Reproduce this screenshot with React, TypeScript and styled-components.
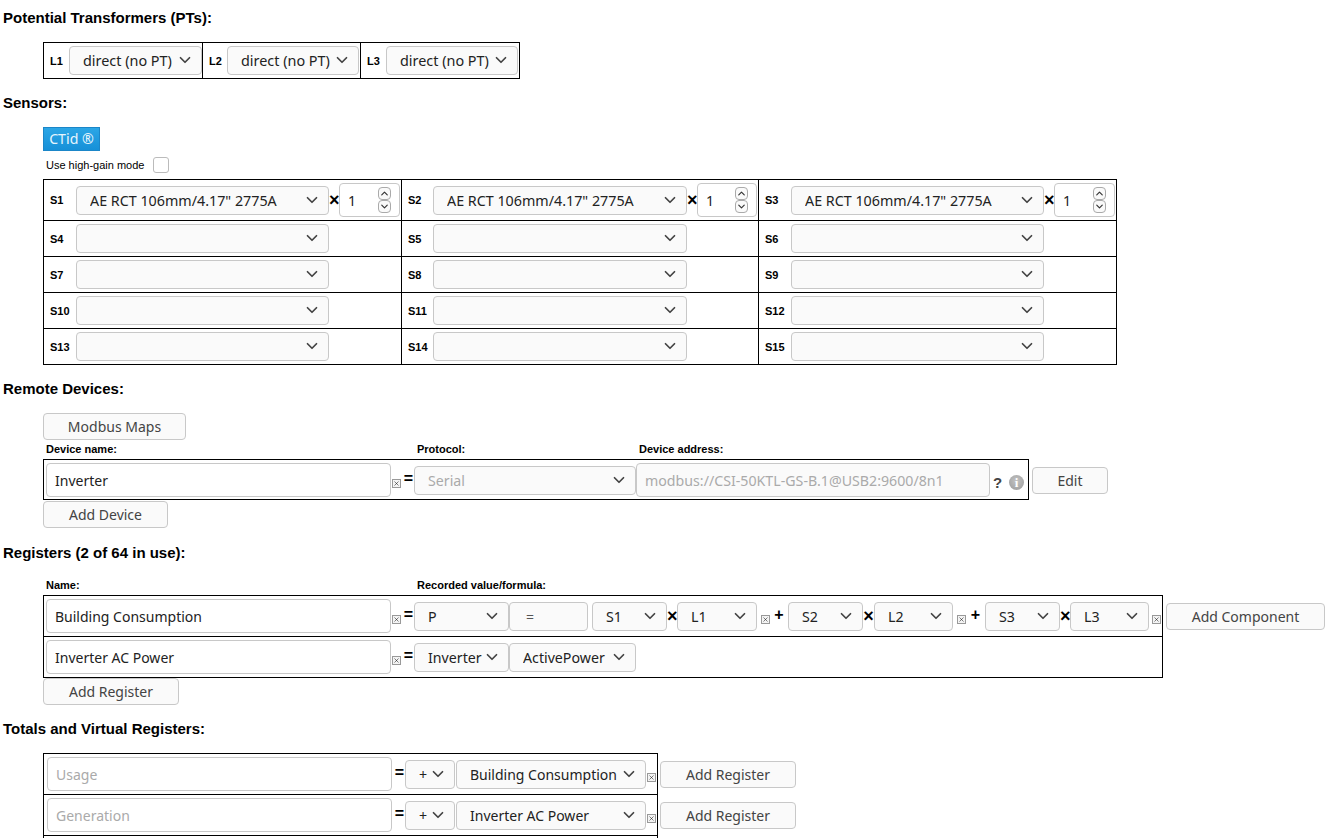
import React, { FC, ReactElement } from "react";
import styled, { createGlobalStyle } from "styled-components";
import { ChevronDown, ChevronUp, X } from "lucide-react";

const GlobalStyle = createGlobalStyle`
  html, body {
    margin: 0;
    height: 838px;
    overflow: hidden;
    background: #fff;
    color: #000;
    font-family: "Liberation Sans", Arial, sans-serif;
  }
`;

const CONTROL_FONT = `"Noto Sans", "Open Sans", sans-serif`;

type DropdownProps = {
  width: number;
  value?: string;
  disabled?: boolean;
  fontSize?: number;
};

const Dropdown: FC<DropdownProps> = ({ width, value = "", disabled, fontSize = 14.2 }: DropdownProps): ReactElement => {
  return (
    <StyledDropdown $width={width}>
      <StyledSelect $fontSize={fontSize} defaultValue={value} disabled={disabled}>
        <option value={value}>{value}</option>
      </StyledSelect>
      <StyledChevron>
        <ChevronDown size={18} strokeWidth={2.3} />
      </StyledChevron>
    </StyledDropdown>
  );
};

const Multiplier: FC<{ width: number }> = ({ width }): ReactElement => (
  <StyledMultiplier $width={width}>
    <StyledNumberInput type="text" defaultValue="1" />
    <StyledStepper>
      <StyledStep>
        <ChevronUp size={11} strokeWidth={2.5} />
      </StyledStep>
      <StyledStep>
        <ChevronDown size={11} strokeWidth={2.5} />
      </StyledStep>
    </StyledStepper>
  </StyledMultiplier>
);

const RemoveBox: FC<{ left?: number }> = ({ left = 1 }): ReactElement => (
  <StyledRemoveBox $left={left}>
    <X size={11} strokeWidth={1.7} />
  </StyledRemoveBox>
);

const PT_CELLS = [
  { label: "L1", width: 159, selectWidth: 133, labelWidth: 19 },
  { label: "L2", width: 158, selectWidth: 132, labelWidth: 18 },
  { label: "L3", width: 158, selectWidth: 132, labelWidth: 19 },
];

const SENSOR_COLUMNS = [
  { width: 358, labelWidth: 26, selectWidth: 253, numberWidth: 61 },
  { width: 357, labelWidth: 25, selectWidth: 254, numberWidth: 60 },
  { width: 357, labelWidth: 26, selectWidth: 253, numberWidth: 61 },
];

const SENSOR_ROWS = [
  ["S1", "S2", "S3"],
  ["S4", "S5", "S6"],
  ["S7", "S8", "S9"],
  ["S10", "S11", "S12"],
  ["S13", "S14", "S15"],
];

const TERMS = [
  { sensor: "S1", line: "L1", plusWidth: 4, timesWidth: 10, lineWidth: 80, boxLeft: 4 },
  { sensor: "S2", line: "L2", plusWidth: 18, timesWidth: 11, lineWidth: 79, boxLeft: 4 },
  { sensor: "S3", line: "L3", plusWidth: 19, timesWidth: 10, lineWidth: 79, boxLeft: 3 },
];

const TOTALS = [
  { name: "Usage", source: "Building Consumption" },
  { name: "Generation", source: "Inverter AC Power" },
];

export default function App(): ReactElement {
  return (
    <StyledPage>
      <GlobalStyle />

      <StyledHeading $top={9}>Potential Transformers (PTs):</StyledHeading>
      <StyledIndent $top={16}>
        <StyledTable>
          <StyledRow $height={35}>
            {PT_CELLS.map((cell) => (
              <StyledCell key={cell.label} $width={cell.width}>
                <StyledCellLabel $width={cell.labelWidth}>{cell.label}</StyledCellLabel>
                <Dropdown width={cell.selectWidth} value="direct (no PT)" fontSize={14.4} />
              </StyledCell>
            ))}
          </StyledRow>
        </StyledTable>
      </StyledIndent>

      <StyledHeading $top={15}>Sensors:</StyledHeading>
      <StyledIndent $top={16}>
        <StyledCtidButton>CTid ®</StyledCtidButton>
        <StyledCheckRow>
          Use high-gain mode
          <StyledCheckbox type="checkbox" />
        </StyledCheckRow>
        <StyledTable>
          {SENSOR_ROWS.map((row, rowIndex) => (
            <StyledRow key={row[0]} $height={rowIndex === 0 ? 40 : 35}>
              {row.map((sensor, columnIndex) => {
                const column = SENSOR_COLUMNS[columnIndex];
                return (
                  <StyledCell key={sensor} $width={column.width}>
                    <StyledCellLabel $width={column.labelWidth}>{sensor}</StyledCellLabel>
                    <Dropdown
                      width={column.selectWidth}
                      value={rowIndex === 0 ? 'AE RCT 106mm/4.17" 2775A' : ""}
                      fontSize={14.3}
                    />
                    {rowIndex === 0 && (
                      <>
                        <StyledTimes $width={10}>×</StyledTimes>
                        <Multiplier width={column.numberWidth} />
                      </>
                    )}
                  </StyledCell>
                );
              })}
            </StyledRow>
          ))}
        </StyledTable>
      </StyledIndent>

      <StyledHeading $top={15}>Remote Devices:</StyledHeading>
      <StyledIndent $top={16}>
        <StyledButton $width={143}>Modbus Maps</StyledButton>
        <StyledColumnLabels $top={3}>
          <StyledColumnLabel $width={371}>Device name:</StyledColumnLabel>
          <StyledColumnLabel $width={222}>Protocol:</StyledColumnLabel>
          <StyledColumnLabel $width={200}>Device address:</StyledColumnLabel>
        </StyledColumnLabels>
        <StyledTableLine>
          <StyledTable>
            <StyledRow $height={39}>
              <StyledRowBody $left={2} $width={984} $nudge={1}>
                <StyledTextInput $width={345} defaultValue="Inverter" />
                <RemoveBox />
                <StyledEquals $width={13}>=</StyledEquals>
                <Dropdown width={222} value="Serial" disabled />
                <StyledTextInput
                  $width={354}
                  $muted
                  disabled
                  defaultValue="modbus://CSI-50KTL-GS-B.1@USB2:9600/8n1"
                />
                <StyledHelp>?</StyledHelp>
                <StyledInfo>i</StyledInfo>
              </StyledRowBody>
            </StyledRow>
          </StyledTable>
          <StyledEditButton $width={76}>Edit</StyledEditButton>
        </StyledTableLine>
        <StyledAddDeviceButton $width={125}>Add Device</StyledAddDeviceButton>
      </StyledIndent>

      <StyledHeading $top={16}>Registers (2 of 64 in use):</StyledHeading>
      <StyledIndent $top={18}>
        <StyledColumnLabels $top={0}>
          <StyledColumnLabel $width={371}>Name:</StyledColumnLabel>
          <StyledColumnLabel $width={222}>Recorded value/formula:</StyledColumnLabel>
        </StyledColumnLabels>
        <StyledTableLine>
          <StyledTable>
            <StyledRow $height={40}>
              <StyledRowBody $left={2} $width={1118}>
                <StyledTextInput $width={345} defaultValue="Building Consumption" />
                <RemoveBox />
                <StyledEquals $width={13}>=</StyledEquals>
                <Dropdown width={95} value="P" />
                <StyledEqualsInput defaultValue="=" disabled />
                {TERMS.map((term, index) => (
                  <React.Fragment key={term.sensor}>
                    <StyledOperator $width={term.plusWidth}>{index === 0 ? "" : "+"}</StyledOperator>
                    <Dropdown width={75} value={term.sensor} />
                    <StyledTimes $width={term.timesWidth}>×</StyledTimes>
                    <Dropdown width={term.lineWidth} value={term.line} />
                    <RemoveBox left={term.boxLeft} />
                  </React.Fragment>
                ))}
              </StyledRowBody>
            </StyledRow>
            <StyledRow $height={40}>
              <StyledRowBody $left={2} $width={1118}>
                <StyledTextInput $width={345} defaultValue="Inverter AC Power" />
                <RemoveBox />
                <StyledEquals $width={13}>=</StyledEquals>
                <Dropdown width={95} value="Inverter" />
                <Dropdown width={127} value="ActivePower" />
              </StyledRowBody>
            </StyledRow>
          </StyledTable>
          <StyledEditButton $width={159}>Add Component</StyledEditButton>
        </StyledTableLine>
        <StyledButton $width={136}>Add Register</StyledButton>
      </StyledIndent>

      <StyledHeading $top={15}>Totals and Virtual Registers:</StyledHeading>
      <StyledIndent $top={16}>
        <StyledTotalsTable>
          {TOTALS.map((total) => (
            <StyledRow key={total.name} $height={40}>
              <StyledRowBody $left={3} $width={612}>
                <StyledTextInput $width={345} placeholder={total.name} />
                <StyledEquals $width={13}>=</StyledEquals>
                <Dropdown width={50} value="+" />
                <StyledSourceSlot>
                  <Dropdown width={190} value={total.source} fontSize={14} />
                </StyledSourceSlot>
                <RemoveBox />
                <StyledRowAction>
                  <StyledButton $width={136}>Add Register</StyledButton>
                </StyledRowAction>
              </StyledRowBody>
            </StyledRow>
          ))}
          <StyledRow $height={40} />
        </StyledTotalsTable>
      </StyledIndent>
    </StyledPage>
  );
}

const StyledPage = styled.div`
  display: flex;
  flex-direction: column;
  height: 838px;
  overflow: hidden;
`;

const StyledHeading = styled.div<{ $top: number }>`
  margin-top: ${(p) => p.$top}px;
  padding-left: 3px;
  font-size: 15px;
  font-weight: 700;
  line-height: 17px;
`;

const StyledIndent = styled.div<{ $top: number }>`
  display: flex;
  flex-direction: column;
  align-items: flex-start;
  margin-top: ${(p) => p.$top}px;
  padding-left: 43px;
`;

const StyledTable = styled.div`
  display: inline-flex;
  flex-direction: column;
  flex: none;
  border: 1px solid #000;
`;

const StyledTotalsTable = styled(StyledTable)`
  width: 613px;
`;

const StyledRow = styled.div<{ $height: number }>`
  display: flex;
  height: ${(p) => p.$height}px;

  & + & {
    border-top: 1px solid #000;
  }
`;

const StyledCell = styled.div<{ $width: number }>`
  display: flex;
  align-items: center;
  flex: none;
  box-sizing: border-box;
  width: ${(p) => p.$width}px;
  padding-left: 6px;
  border-right: 1px solid #000;

  &:last-child {
    border-right: none;
  }
`;

const StyledCellLabel = styled.span<{ $width: number }>`
  flex: none;
  width: ${(p) => p.$width}px;
  font-size: 11px;
  font-weight: 700;
`;

const StyledRowBody = styled.div<{ $left: number; $width: number; $nudge?: number }>`
  display: flex;
  align-items: center;
  box-sizing: border-box;
  width: ${(p) => p.$width}px;
  padding-top: ${(p) => p.$nudge ?? 0}px;
  padding-left: ${(p) => p.$left}px;
`;

const StyledDropdown = styled.div<{ $width: number }>`
  position: relative;
  flex: none;
  width: ${(p) => p.$width}px;
  height: 29px;
`;

const StyledSourceSlot = styled.div`
  flex: none;
  margin-left: 1px;
`;

const StyledSelect = styled.select<{ $fontSize: number }>`
  display: block;
  width: 100%;
  height: 100%;
  box-sizing: border-box;
  padding: 0 26px 0 13px;
  appearance: none;
  background: #fafafa;
  border: 1px solid #c8c8c8;
  border-radius: 4px;
  color: #222;
  font-family: ${CONTROL_FONT};
  font-size: ${(p) => p.$fontSize}px;
  opacity: 1;

  &:disabled {
    color: #aaa;
  }
`;

const StyledChevron = styled.span`
  position: absolute;
  top: 5px;
  right: 8px;
  display: flex;
  color: #444;
  pointer-events: none;
`;

const StyledTextInput = styled.input<{ $width: number; $muted?: boolean }>`
  flex: none;
  box-sizing: border-box;
  width: ${(p) => p.$width}px;
  height: 34px;
  padding: 0 8px;
  background: ${(p) => (p.$muted ? "#fafafa" : "#fff")};
  border: 1px solid #c8c8c8;
  border-radius: 4px;
  color: ${(p) => (p.$muted ? "#aaa" : "#222")};
  font-family: ${CONTROL_FONT};
  font-size: ${(p) => (p.$muted ? 14.2 : 14)}px;

  &::placeholder {
    color: #aaa;
    opacity: 1;
  }
`;

const StyledEqualsInput = styled.input`
  flex: none;
  box-sizing: border-box;
  width: 79px;
  height: 29px;
  padding: 0 0 0 16px;
  background: #fafafa;
  border: 1px solid #c8c8c8;
  border-radius: 4px;
  color: #555;
  font-family: ${CONTROL_FONT};
  font-size: 14px;
`;

const StyledOperator = styled.span<{ $width: number }>`
  flex: none;
  width: ${(p) => p.$width}px;
  margin-top: -3px;
  font-size: 16px;
  font-weight: 700;
  line-height: 16px;
  text-align: center;
`;

const StyledEquals = styled(StyledOperator)`
  box-sizing: border-box;
  padding-right: 1px;
  text-align: right;
`;

const StyledTimes = styled(StyledOperator)`
  margin-top: 0;
  font-size: 18px;
`;

const StyledRemoveBox = styled.span<{ $left: number }>`
  display: flex;
  align-items: center;
  justify-content: center;
  flex: none;
  box-sizing: border-box;
  width: 9px;
  height: 9px;
  margin: 7px 0 0 ${(p) => p.$left}px;
  overflow: hidden;
  background: #f4f4f4;
  border: 1px solid #999;
  color: #000;
`;

const StyledMultiplier = styled.div<{ $width: number }>`
  position: relative;
  flex: none;
  width: ${(p) => p.$width}px;
  height: 34px;
`;

const StyledNumberInput = styled.input`
  box-sizing: border-box;
  width: 100%;
  height: 100%;
  padding: 0 24px 0 8px;
  background: #fff;
  border: 1px solid #c8c8c8;
  border-radius: 4px;
  color: #222;
  font-family: ${CONTROL_FONT};
  font-size: 14.2px;
`;

const StyledStepper = styled.div`
  position: absolute;
  top: 4px;
  right: 9px;
  display: flex;
  flex-direction: column;
`;

const StyledStep = styled.span`
  display: flex;
  align-items: center;
  justify-content: center;
  box-sizing: border-box;
  width: 13px;
  height: 13px;
  background: #fafafa;
  border: 1px solid #aaa;
  border-radius: 4px;
  color: #333;
`;

const StyledCtidButton = styled.button`
  box-sizing: border-box;
  width: 57px;
  height: 24px;
  padding: 0 0 2px;
  background: linear-gradient(#2ba6e6, #1690d8);
  border: 1px solid #1b86c8;
  color: #e6f5fd;
  font-family: ${CONTROL_FONT};
  font-size: 14.2px;
`;

const StyledCheckRow = styled.label`
  display: flex;
  align-items: center;
  height: 28px;
  padding-left: 3px;
  font-size: 11px;
`;

const StyledCheckbox = styled.input`
  width: 16px;
  height: 16px;
  margin: 0 0 0 9px;
  appearance: none;
  background: #fff;
  border: 1px solid #bbb;
  border-radius: 3px;
`;

const StyledButton = styled.button<{ $width: number }>`
  flex: none;
  box-sizing: border-box;
  width: ${(p) => p.$width}px;
  height: 27px;
  padding: 0;
  background: #fafafa;
  border: 1px solid #c8c8c8;
  border-radius: 4px;
  color: #444;
  font-family: ${CONTROL_FONT};
  font-size: 14px;
`;

const StyledEditButton = styled(StyledButton)`
  margin-top: 8px;
`;

const StyledAddDeviceButton = styled(StyledButton)`
  margin-top: 1px;
`;

const StyledColumnLabels = styled.div<{ $top: number }>`
  display: flex;
  align-items: center;
  height: 12px;
  margin-top: ${(p) => p.$top}px;
  margin-bottom: 4px;
  padding-left: 3px;
`;

const StyledColumnLabel = styled.span<{ $width: number }>`
  width: ${(p) => p.$width}px;
  font-size: 11px;
  font-weight: 700;
`;

const StyledTableLine = styled.div`
  display: flex;
  align-items: flex-start;
  gap: 3px;
`;

const StyledHelp = styled.span`
  flex: none;
  width: 16px;
  margin: 5px 0 0 3px;
  color: #444;
  font-size: 15px;
  font-weight: 700;
`;

const StyledInfo = styled.span`
  display: flex;
  align-items: center;
  justify-content: center;
  flex: none;
  width: 15px;
  height: 15px;
  margin-top: 5px;
  background: radial-gradient(circle at 50% 40%, #c4c4c4, #999);
  border-radius: 50%;
  color: #fff;
  font-family: "Liberation Serif", serif;
  font-size: 13px;
  font-weight: 700;
`;

const StyledRowAction = styled.div`
  margin-left: 4px;
  flex: none;
`;
